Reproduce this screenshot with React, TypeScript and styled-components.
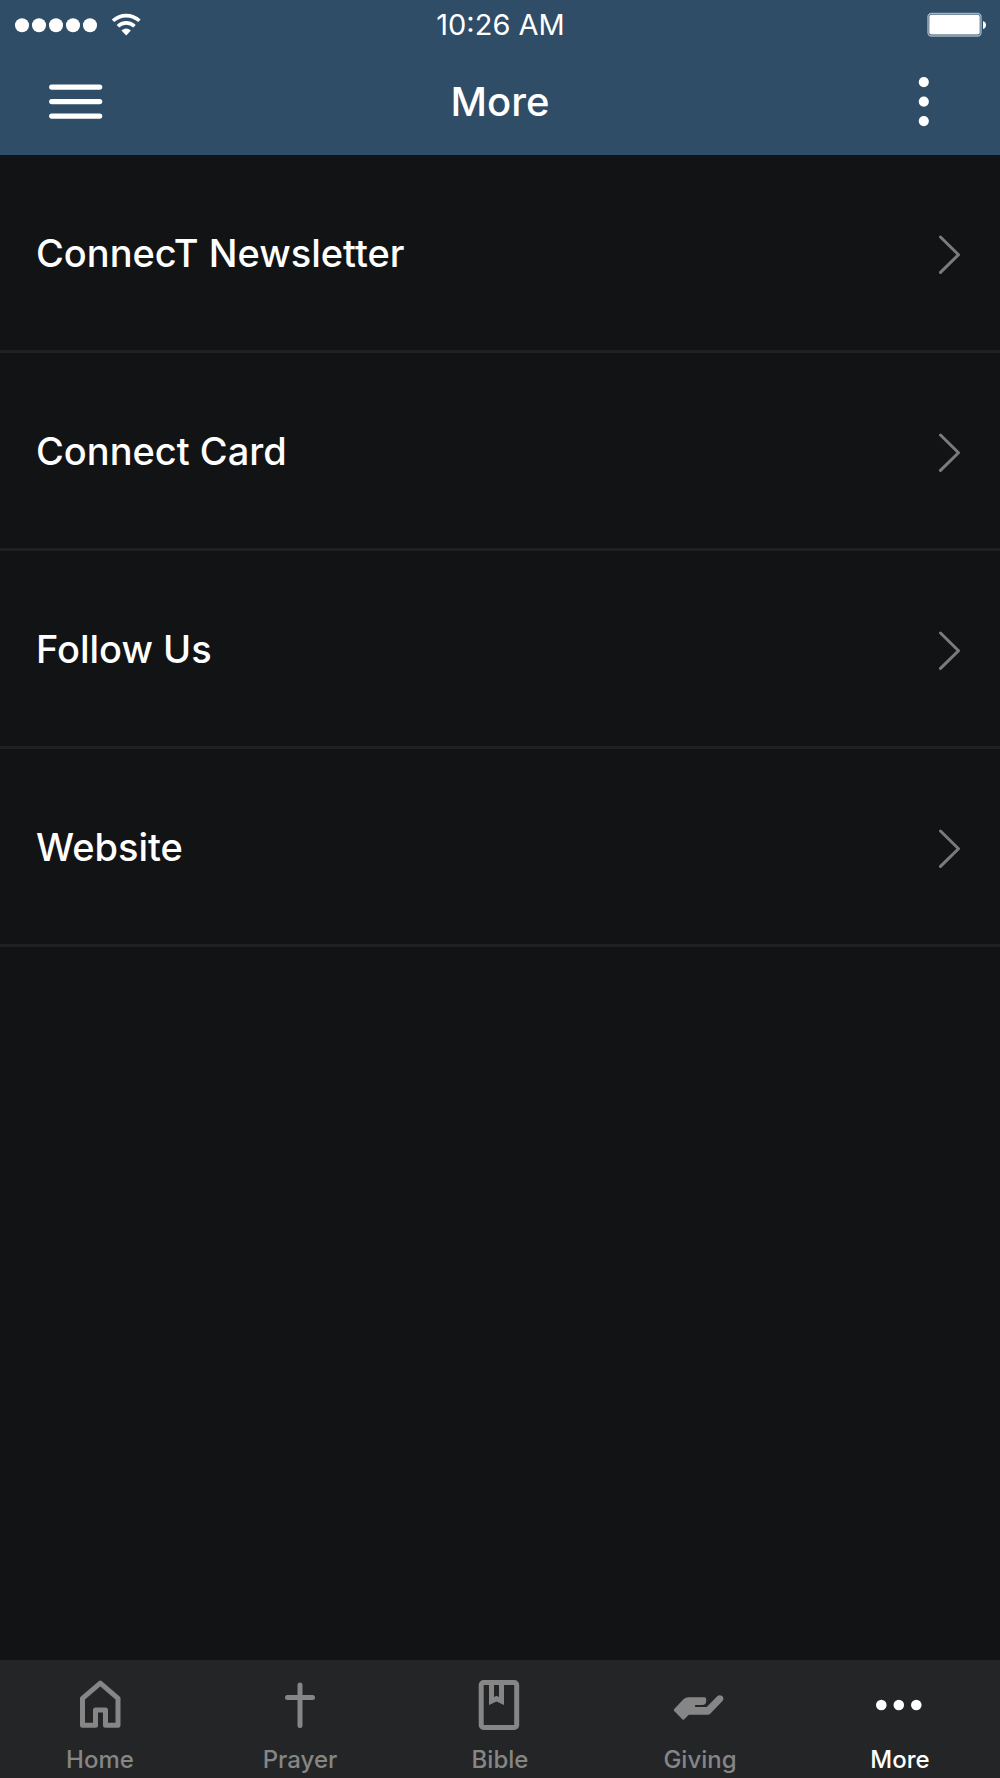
import React from "react";
import styled, { createGlobalStyle } from "styled-components";

const colors = {
  header: "#2f4d66",
  page: "#121315",
  divider: "#202123",
  bar: "#242526",
  muted: "#868686",
  chevron: "#7b7b7b",
  text: "#ffffff",
};

const GlobalStyle = createGlobalStyle`
  *, *::before, *::after { box-sizing: border-box; }
  body {
    margin: 0;
    background: ${colors.page};
    color: ${colors.text};
    font-family: Inter, "Liberation Sans", sans-serif;
  }
`;

const Screen = styled.div`
  display: flex;
  flex-direction: column;
  min-height: 100vh;
`;

const Header = styled.header`
  background: ${colors.header};
`;

const StatusBar = styled.div`
  display: grid;
  grid-template-columns: 1fr auto 1fr;
  align-items: center;
  height: 50px;
  padding: 0 14px 0 15px;
`;

const Signal = styled.div`
  display: flex;
  align-items: center;
  gap: 14px;
`;

const Time = styled.time`
  font-size: 29px;
  line-height: 32px;
`;

const Battery = styled.svg`
  justify-self: end;
`;

const NavBar = styled.div`
  display: grid;
  grid-template-columns: 1fr auto 1fr;
  align-items: center;
  height: 105px;
  padding: 0 48px 2px;
`;

const Title = styled.h1`
  margin: 0;
  font-size: 40px;
  font-weight: 500;
  line-height: 48px;
`;

const IconButton = styled.button<{ $end?: boolean }>`
  display: flex;
  justify-self: ${(p) => (p.$end ? "end" : "start")};
  padding: 0;
  border: 0;
  background: none;
  color: inherit;
  cursor: pointer;
`;

const Main = styled.main`
  flex: 1;
`;

const List = styled.ul`
  margin: 0;
  padding: 0;
  list-style: none;
`;

const RowLink = styled.a`
  display: flex;
  align-items: center;
  justify-content: space-between;
  height: 198px;
  padding: 0 39px 0 36px;
  border-bottom: 3px solid ${colors.divider};
  color: inherit;
  font-size: 38px;
  font-weight: 500;
  line-height: 48px;
  text-decoration: none;
`;

const TabBar = styled.nav`
  display: grid;
  grid-template-columns: repeat(5, 1fr);
  height: 118px;
  background: ${colors.bar};
`;

const Tab = styled.a<{ $active?: boolean }>`
  display: flex;
  flex-direction: column;
  align-items: center;
  gap: 12px;
  padding-top: 16px;
  color: ${(p) => (p.$active ? colors.text : colors.muted)};
  font-size: 24px;
  font-weight: 500;
  line-height: 32px;
  text-decoration: none;
`;

const Chevron = () => (
  <svg width="24" height="42" viewBox="0 0 24 42" fill="none" stroke={colors.chevron} strokeWidth="3" strokeLinecap="round" strokeLinejoin="round" aria-hidden="true">
    <path d="M3.5 5L21.5 22.7L3.5 40.4" />
  </svg>
);

const TabIcon = ({ children }: { children: React.ReactNode }) => (
  <svg width="60" height="56" viewBox="0 0 60 56" fill="none" stroke="currentColor" strokeWidth="5" strokeLinejoin="round" aria-hidden="true">
    {children}
  </svg>
);

const rows = ["ConnecT Newsletter", "Connect Card", "Follow Us", "Website"];

const tabs = [
  {
    label: "Home",
    icon: <path d="M12.5 49.2V22.3L30.3 7.2L48 22.3V49.2H35.5V34H25.5V49.2Z" />,
  },
  {
    label: "Prayer",
    icon: <path d="M30 9V49.5M17.5 21.5H42.5" strokeLinecap="round" />,
  },
  {
    label: "Bible",
    icon: (
      <>
        <rect x="11.2" y="6.5" width="35.5" height="45" rx="2.5" />
        <path d="M19 7V29L26.5 25.5L34 29V7H29V21L26.5 19.8L24 21V7Z" fill="currentColor" stroke="none" />
      </>
    ),
  },
  {
    label: "Giving",
    icon: (
      <path
        d="M4.2 33L13.5 23.3Q15.5 21.3 18.5 21.3H34.5Q36.2 21.3 36.2 23V25Q36.2 29 32.2 29H26Q24.8 29 24.8 30T26 31H36.7L47.2 20.2C50.5 17.2 55.5 21.2 52.5 25L40.5 37.5Q39.3 38.8 37.5 38.8H18.8L14.3 43.2Q13.3 44.2 12.3 43.2L4.2 35Q3.2 34 4.2 33Z"
        fill="currentColor"
        stroke="none"
      />
    ),
  },
  {
    label: "More",
    active: true,
    icon: (
      <g fill="currentColor" stroke="none">
        <circle cx="11.3" cy="29" r="5.3" />
        <circle cx="28.8" cy="29" r="5.3" />
        <circle cx="46.3" cy="29" r="5.3" />
      </g>
    ),
  },
];

export default function App() {
  return (
    <Screen>
      <GlobalStyle />
      <Header>
        <StatusBar>
          <Signal>
            <svg width="82" height="16" viewBox="0 0 82 16" fill="#fff" role="img" aria-label="Signal strength">
              {[7, 24, 41, 58, 75].map((x) => (
                <circle key={x} cx={x} cy="8.3" r="7" />
              ))}
            </svg>
            <svg width="30" height="24" viewBox="0 0 30 24" fill="none" stroke="#fff" strokeWidth="3.6" role="img" aria-label="Wi-Fi">
              <path d="M2 7.8A19.5 19.5 0 0 1 28.4 7.8" />
              <path d="M6.9 13.2A12 12 0 0 1 23.5 13.2" />
              <path d="M10.5 17.4Q15.2 13.4 19.9 17.4L15.2 22.4Z" fill="#fff" stroke="none" />
            </svg>
          </Signal>
          <Time>10:26 AM</Time>
          <Battery width="59" height="26" viewBox="0 0 59 26" role="img" aria-label="Battery full">
            <rect x="1" y="1.5" width="53" height="22.5" rx="3.5" fill="none" stroke="#a5b3c0" strokeWidth="1.4" />
            <rect x="2.3" y="2.8" width="50.4" height="19.8" rx="2" fill="#fff" />
            <path d="M56 9Q59 10 59 13T56 17Z" fill="#fff" />
          </Battery>
        </StatusBar>
        <NavBar>
          <IconButton type="button" aria-label="Menu">
            <svg width="56" height="40" viewBox="0 0 56 40" stroke="#fff" strokeWidth="5.2" strokeLinecap="round">
              <path d="M3.7 5.1H51.7M3.7 19.6H51.7M3.7 34.1H51.7" />
            </svg>
          </IconButton>
          <Title>More</Title>
          <IconButton type="button" aria-label="Options" $end>
            <svg width="56" height="52" viewBox="0 0 56 52" fill="#fff">
              <circle cx="27.8" cy="6.1" r="5.1" />
              <circle cx="27.8" cy="25.6" r="5.1" />
              <circle cx="27.8" cy="45.1" r="5.1" />
            </svg>
          </IconButton>
        </NavBar>
      </Header>
      <Main>
        <List>
          {rows.map((label) => (
            <li key={label}>
              <RowLink href="#">
                {label}
                <Chevron />
              </RowLink>
            </li>
          ))}
        </List>
      </Main>
      <TabBar aria-label="Sections">
        {tabs.map(({ label, icon, active }) => (
          <Tab key={label} href="#" $active={active} aria-current={active ? "page" : undefined}>
            <TabIcon>{icon}</TabIcon>
            {label}
          </Tab>
        ))}
      </TabBar>
    </Screen>
  );
}
